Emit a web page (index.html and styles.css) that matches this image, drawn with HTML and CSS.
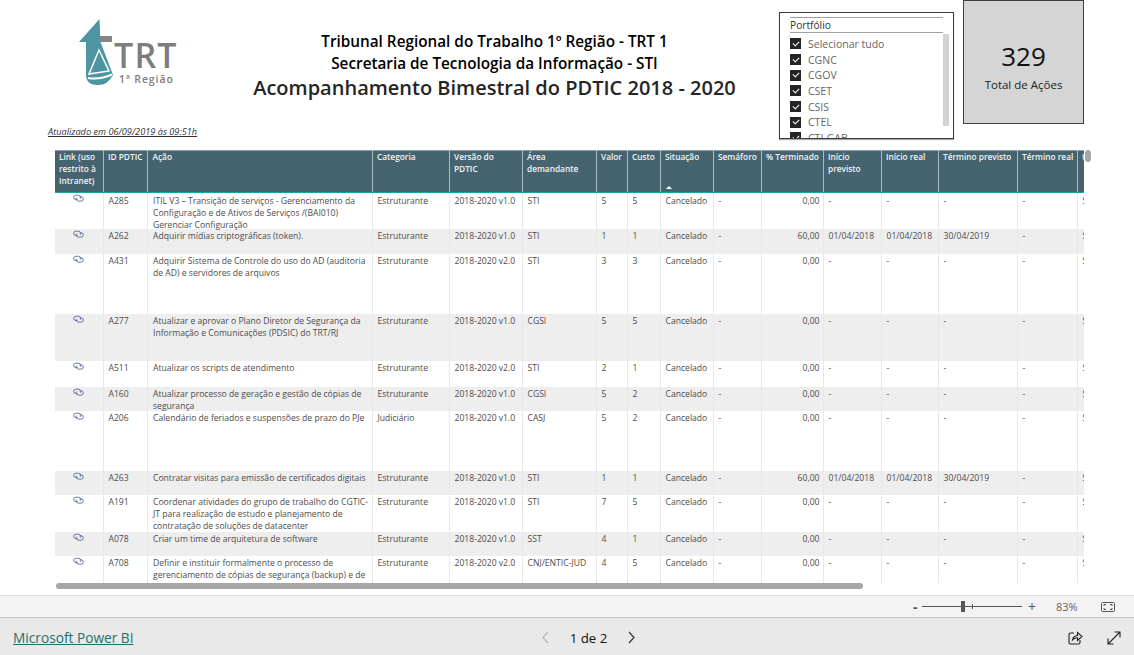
FILE: index.html
```html
<!DOCTYPE html>
<html lang="pt-BR">
<head>
<meta charset="utf-8">
<title>Acompanhamento Bimestral do PDTIC</title>
<link rel="stylesheet" href="styles.css">
</head>
<body>
<svg class="defs" width="0" height="0" aria-hidden="true">
  <symbol id="lnk" viewBox="0 0 12 9">
    <path d="M5 6.200H3A2.400 2.400 0 0 1 3 1.400H6.200A2.400 2.400 0 0 1 8 5.400" fill="none" stroke="#4a5a8a" stroke-width="0.900"/>
    <path d="M7 3.200H9A2.400 2.400 0 0 1 9 8H5.800A2.400 2.400 0 0 1 4 4" fill="none" stroke="#4a5a8a" stroke-width="0.900"/>
  </symbol>
</svg>
<main class="canvas">
  <header class="top">
    <svg class="logo" width="102" height="70" viewBox="0 0 102 70">
      <path d="M21.500 2L22.500 25L35 58Q30 68 20 68Q8 68 8 58V25H1Z" fill="#4e95a3"/>
      <path d="M22 19H34V25H22Z" fill="#858585"/>
      <path d="M21 33L11 57L31 54Z" fill="none" stroke="#fff" stroke-width="1.500"/>
      <path d="M10 61Q22 63 34 57.500" fill="none" stroke="#fff" stroke-width="2"/>
      <text class="logo-big" x="36" y="51">TRT</text>
      <text class="logo-small" x="41" y="66">1ª Região</text>
    </svg>
    <div class="titles">
      <div class="t1">Tribunal Regional do Trabalho 1º Região - TRT 1</div>
      <div class="t1">Secretaria de Tecnologia da Informação - STI</div>
      <div class="t2">Acompanhamento Bimestral do PDTIC 2018 - 2020</div>
    </div>
    <section class="slicer">
      <div class="sl-title">Portfólio</div>
      <div class="sl-body">
        <ul class="sl-list">
          <li><span class="cb"></span>Selecionar tudo</li>
          <li><span class="cb"></span>CGNC</li>
          <li><span class="cb"></span>CGOV</li>
          <li><span class="cb"></span>CSET</li>
          <li><span class="cb"></span>CSIS</li>
          <li><span class="cb"></span>CTEL</li>
          <li><span class="cb"></span>CTI-GAB</li>
        </ul>
        <div class="sl-scroll"></div>
      </div>
    </section>
    <section class="card">
      <div class="card-num">329</div>
      <div class="card-lab">Total de Ações</div>
    </section>
  </header>
  <div class="updated">Atualizado em 06/09/2019 às 09:51h</div>
  <div class="tablewrap">
    <div class="tableclip">
    <table class="grid">
      <colgroup>
        <col class="c1"><col class="c2"><col class="c3"><col class="c4"><col class="c5"><col class="c6"><col class="c7"><col class="c8"><col class="c9"><col class="c10"><col class="c11"><col class="c12"><col class="c13"><col class="c14"><col class="c15"><col class="c16">
      </colgroup>
      <thead>
        <tr>
          <th>Link (uso restrito à Intranet)</th><th>ID PDTIC</th><th>Ação</th><th>Categoria</th><th>Versão do PDTIC</th><th>Área demandante</th><th>Valor</th><th>Custo</th>
          <th>Situação<span class="sort"></span></th><th>Semáforo</th><th class="nw">% Terminado</th><th>Início previsto</th><th>Início real</th><th class="nw">Término previsto</th><th class="nw">Término real</th><th>Unidade</th>
        </tr>
      </thead>
      <tbody>
        <tr class="h36"><td class="ic"><svg width="11" height="8"><use href="#lnk"/></svg></td><td>A285</td><td><span class="fit-cell">ITIL V3 – Transição de serviços - Gerenciamento da Configuração e de Ativos de Serviços /(BAI010) Gerenciar Configuração</span></td><td>Estruturante</td><td>2018-2020 v1.0</td><td>STI</td><td>5</td><td>5</td><td>Cancelado</td><td>-</td><td class="num">0,00</td><td>-</td><td>-</td><td>-</td><td>-</td><td>STI</td></tr>
        <tr class="h25 alt"><td class="ic"><svg width="11" height="8"><use href="#lnk"/></svg></td><td>A262</td><td>Adquirir mídias criptográficas (token).</td><td>Estruturante</td><td>2018-2020 v1.0</td><td>STI</td><td>1</td><td>1</td><td>Cancelado</td><td>-</td><td class="num">60,00</td><td>01/04/2018</td><td>01/04/2018</td><td>30/04/2019</td><td>-</td><td>STI</td></tr>
        <tr class="h60"><td class="ic"><svg width="11" height="8"><use href="#lnk"/></svg></td><td>A431</td><td>Adquirir Sistema de Controle do uso do AD (auditoria de AD) e servidores de arquivos</td><td>Estruturante</td><td>2018-2020 v2.0</td><td>STI</td><td>3</td><td>3</td><td>Cancelado</td><td>-</td><td class="num">0,00</td><td>-</td><td>-</td><td>-</td><td>-</td><td>STI</td></tr>
        <tr class="h47 alt"><td class="ic"><svg width="11" height="8"><use href="#lnk"/></svg></td><td>A277</td><td>Atualizar e aprovar o Plano Diretor de Segurança da Informação e Comunicações (PDSIC) do TRT/RJ</td><td>Estruturante</td><td>2018-2020 v1.0</td><td>CGSI</td><td>5</td><td>5</td><td>Cancelado</td><td>-</td><td class="num">0,00</td><td>-</td><td>-</td><td>-</td><td>-</td><td>STI</td></tr>
        <tr class="h26"><td class="ic"><svg width="11" height="8"><use href="#lnk"/></svg></td><td>A511</td><td>Atualizar os scripts de atendimento</td><td>Estruturante</td><td>2018-2020 v2.0</td><td>STI</td><td>2</td><td>1</td><td>Cancelado</td><td>-</td><td class="num">0,00</td><td>-</td><td>-</td><td>-</td><td>-</td><td>STI</td></tr>
        <tr class="h24 alt"><td class="ic"><svg width="11" height="8"><use href="#lnk"/></svg></td><td>A160</td><td><span class="fit-cell">Atualizar processo de geração e gestão de cópias de segurança</span></td><td>Estruturante</td><td>2018-2020 v1.0</td><td>CGSI</td><td>5</td><td>2</td><td>Cancelado</td><td>-</td><td class="num">0,00</td><td>-</td><td>-</td><td>-</td><td>-</td><td>STI</td></tr>
        <tr class="h60"><td class="ic"><svg width="11" height="8"><use href="#lnk"/></svg></td><td>A206</td><td>Calendário de feriados e suspensões de prazo do PJe</td><td>Judiciário</td><td>2018-2020 v1.0</td><td>CASJ</td><td>5</td><td>2</td><td>Cancelado</td><td>-</td><td class="num">0,00</td><td>-</td><td>-</td><td>-</td><td>-</td><td>STI</td></tr>
        <tr class="h24 alt"><td class="ic"><svg width="11" height="8"><use href="#lnk"/></svg></td><td>A263</td><td>Contratar visitas para emissão de certificados digitais</td><td>Estruturante</td><td>2018-2020 v1.0</td><td>STI</td><td>1</td><td>1</td><td>Cancelado</td><td>-</td><td class="num">60,00</td><td>01/04/2018</td><td>01/04/2018</td><td>30/04/2019</td><td>-</td><td>STI</td></tr>
        <tr class="h37"><td class="ic"><svg width="11" height="8"><use href="#lnk"/></svg></td><td>A191</td><td><span class="fit-cell">Coordenar atividades do grupo de trabalho do CGTIC-JT para realização de estudo e planejamento de contratação de soluções de datacenter</span></td><td>Estruturante</td><td>2018-2020 v1.0</td><td>STI</td><td>7</td><td>5</td><td>Cancelado</td><td>-</td><td class="num">0,00</td><td>-</td><td>-</td><td>-</td><td>-</td><td>STI</td></tr>
        <tr class="h24 alt"><td class="ic"><svg width="11" height="8"><use href="#lnk"/></svg></td><td>A078</td><td>Criar um time de arquitetura de software</td><td>Estruturante</td><td>2018-2020 v1.0</td><td>SST</td><td>4</td><td>1</td><td>Cancelado</td><td>-</td><td class="num">0,00</td><td>-</td><td>-</td><td>-</td><td>-</td><td>STI</td></tr>
        <tr class="h37"><td class="ic"><svg width="11" height="8"><use href="#lnk"/></svg></td><td>A708</td><td><span class="fit-cell">Definir e instituir formalmente o processo de gerenciamento de cópias de segurança (backup) e de restauração</span></td><td>Estruturante</td><td>2018-2020 v2.0</td><td>CNJ/ENTIC-JUD</td><td>4</td><td>5</td><td>Cancelado</td><td>-</td><td class="num">0,00</td><td>-</td><td>-</td><td>-</td><td>-</td><td>STI</td></tr>
      </tbody>
    </table>
    </div>
    <div class="vthumb"></div>
  </div>
  <div class="hscroll"><div class="hthumb"></div></div>
</main>
<div class="zoombar">
  <span class="zm">-</span>
  <div class="slider"><span class="tick"></span><span class="knob"></span></div>
  <span class="zp">+</span>
  <span class="zpct">83%</span>
  <svg class="fit" width="14" height="10" viewBox="0 0 14 10"><rect x="0.500" y="0.500" width="13" height="9" rx="1" fill="none" stroke="#555"/><path d="M3 4V2.500H5M9 2.500H11V4M11 6V7.500H9M5 7.500H3V6" fill="none" stroke="#555"/></svg>
</div>
<footer class="foot">
  <a class="pbi" href="#">Microsoft Power BI</a>
  <nav class="pager">
    <svg width="9" height="13" viewBox="0 0 9 13"><path d="M7 1L2 6.500L7 12" fill="none" stroke="#b8b8b8" stroke-width="1.200"/></svg>
    <span class="pg">1 de 2</span>
    <svg width="9" height="13" viewBox="0 0 9 13"><path d="M2 1L7 6.500L2 12" fill="none" stroke="#333" stroke-width="1.200"/></svg>
  </nav>
  <div class="foot-icons">
    <svg width="15" height="15" viewBox="0 0 15 15"><path d="M6 3H2.500Q1 3 1 4.500V12.500Q1 14 2.500 14H10.500Q12 14 12 12.500V10" fill="none" stroke="#222" stroke-width="1.100"/><path d="M4.500 10Q5 6 9.500 5.500V2.500L14 6.500L9.500 10.500V7.800Q6.500 7.800 4.500 10Z" fill="none" stroke="#222" stroke-width="1.100"/></svg>
    <svg width="14" height="14" viewBox="0 0 14 14"><path d="M1 13L13 1M7.500 1H13V6.500M1 7.500V13H6.500" fill="none" stroke="#222" stroke-width="1.100"/></svg>
  </div>
</footer>
</body>
</html>
```

FILE: styles.css
```css
* { box-sizing: border-box; }
html, body { margin: 0; height: 100%; }
body {
  width: 1134px;
  height: 655px;
  overflow: hidden;
  background: #fff;
  font-family: "Open Sans", "Noto Sans", sans-serif;
  display: flex;
  flex-direction: column;
}
.defs { position: absolute; }
.canvas { height: 595px; padding-left: 55px; flex: none; }

.top { display: flex; height: 126px; align-items: flex-start; }
.logo { margin: 17px 0 0 23px; flex: none; overflow: visible; }
.logo-big { font: 600 34px "Open Sans", sans-serif; fill: #7d7d7d; letter-spacing: 1.200px; }
.logo-small { font: 600 10.500px "Open Sans", sans-serif; fill: #7d7d7d; letter-spacing: 0.900px; }
.titles { width: 555px; margin: 29.500px 0 0 37px; text-align: center; flex: none; color: #000; }
.t1 { font-size: 15.300px; font-weight: 600; line-height: 22px; height: 22px; white-space: nowrap; }
.t2 { font-size: 20px; font-weight: 600; line-height: 27px; color: #252525; white-space: nowrap; }

.slicer {
  width: 175px; height: 127px; margin: 12px 0 0 7px; flex: none;
  border: 1px solid #3a3a3a; background: #fff; padding: 4px 0 0 10px; overflow: hidden;
  box-shadow: 0 1px 1px #aaa;
}
.sl-title {
  width: 153px; height: 16px; border-top: 1px solid #a0a0a0; border-bottom: 1px solid #a0a0a0;
  font-size: 10.200px; line-height: 15px; color: #333; margin-bottom: 1px;
}
.sl-body { display: flex; }
.sl-list { list-style: none; margin: 2px 0 0; padding: 0; width: 153px; }
.sl-list li { height: 15.700px; display: flex; align-items: center; font-size: 10.500px; color: #666; white-space: nowrap; }
.cb {
  width: 11px; height: 11px; margin-right: 7px; background: #252423; flex: none; position: relative;
}
.cb::after {
  content: ""; position: absolute; left: 3px; top: 2.500px; width: 5px; height: 3px;
  border-left: 1px solid #fff; border-bottom: 1px solid #fff; transform: rotate(-45deg);
}
.sl-scroll { width: 6px; height: 92px; background: #d2d2d2; }

.card {
  width: 121px; height: 124px; margin: 0 0 0 9px; flex: none;
  background: #d5d5d5; border: 1px solid #3f3f3f;
  display: flex; flex-direction: column; align-items: center; padding-top: 38px;
}
.card-num { font-size: 26px; line-height: 34px; color: #111; }
.card-lab { font-size: 11.500px; line-height: 15px; color: #222; margin-top: 4px; }

.updated {
  font-size: 9.200px; line-height: 12px; height: 24px; font-style: italic; color: #333;
  text-decoration: underline; margin-left: -7px;
}

.tablewrap { width: 1036px; height: 433px; position: relative; }
.tableclip { width: 1029px; height: 433px; overflow: hidden; }
.grid { border-collapse: collapse; table-layout: fixed; width: 1100px; font-size: 8.600px; color: #4d4d4d; }
.c1 { width: 48px; } .c2 { width: 44.500px; } .c3 { width: 224.500px; } .c4 { width: 77px; }
.c5 { width: 73px; } .c6 { width: 74px; } .c7 { width: 31px; } .c8 { width: 33px; }
.c9 { width: 53px; } .c10 { width: 48px; } .c11 { width: 62px; } .c12 { width: 58px; }
.c13 { width: 57px; } .c14 { width: 79px; } .c15 { width: 60px; } .c16 { width: 78px; }
.grid th {
  height: 42px; background: #466470; color: #f2f5f6; font-weight: 600; font-size: 8.300px; text-align: left; vertical-align: top;
  padding: 0 2px 0 4.500px; line-height: 12px; position: relative;
  border-right: 1px solid #a9bcc3; border-top: 1px solid #8ca0a8; border-bottom: 1px solid #14a6a0;
}
.grid th:first-child { padding-left: 4px; }
.nw { white-space: nowrap; }
.sort {
  position: absolute; left: 5px; bottom: 3px; width: 0; height: 0;
  border-left: 3.500px solid transparent; border-right: 3.500px solid transparent; border-bottom: 3px solid #fff;
}
.grid td {
  vertical-align: top; padding: 1.500px 2px 0 5px; line-height: 12px; border-right: 1px solid #e8e8e8;
}
.fit-cell { display: block; height: 22px; }
.grid td.ic { padding: 1px 0 0; text-align: center; }
.grid td.ic svg { display: block; margin: 0 auto; }
.grid td.num { text-align: right; padding-right: 3px; }
.alt td { background: #eee; }
.h24 { height: 24px; } .h25 { height: 25px; } .h26 { height: 26px; } .h36 { height: 36px; }
.h37 { height: 37px; } .h47 { height: 47px; } .h60 { height: 60px; }
.vthumb {
  position: absolute; left: 1030px; top: 0; width: 6px; height: 12px; border-radius: 3px; background: #a6a6a6;
}
.hscroll { height: 6px; margin-left: 1px; }
.hthumb { width: 807px; height: 6px; border-radius: 3px; background: #a6a6a6; }

.zoombar {
  height: 23px; flex: none; background: #f3f3f3; border-top: 1px solid #dcdcdc; border-bottom: 1px solid #c8c8c8;
  display: flex; align-items: center; color: #555; padding-left: 913px;
}
.zm { width: 9px; font-size: 14px; font-weight: 700; line-height: 14px; }
.slider { width: 100px; height: 1px; background: #555; position: relative; }
.tick { position: absolute; left: 50px; top: -2px; width: 1px; height: 5px; background: #555; }
.knob { position: absolute; left: 39px; top: -5px; width: 4px; height: 11px; background: #555; }
.zp { margin-left: 6px; width: 9px; font-size: 14px; line-height: 14px; }
.zpct { margin-left: 19px; width: 28px; font-size: 11px; color: #666; }
.fit { margin-left: 17px; }

.foot {
  flex: 1; background: #e9e9e9; display: flex; align-items: center; padding: 2px 0 0 13px;
}
.pbi { font-size: 13.700px; color: #1f6f6c; text-decoration: underline; width: 525px; }
.pager { display: flex; align-items: center; width: 95px; justify-content: space-between; margin-left: 3px; }
.pg { font-size: 13.300px; font-weight: 500; color: #111; }
.foot-icons { display: flex; align-items: center; gap: 24px; margin-left: 432px; }
```
